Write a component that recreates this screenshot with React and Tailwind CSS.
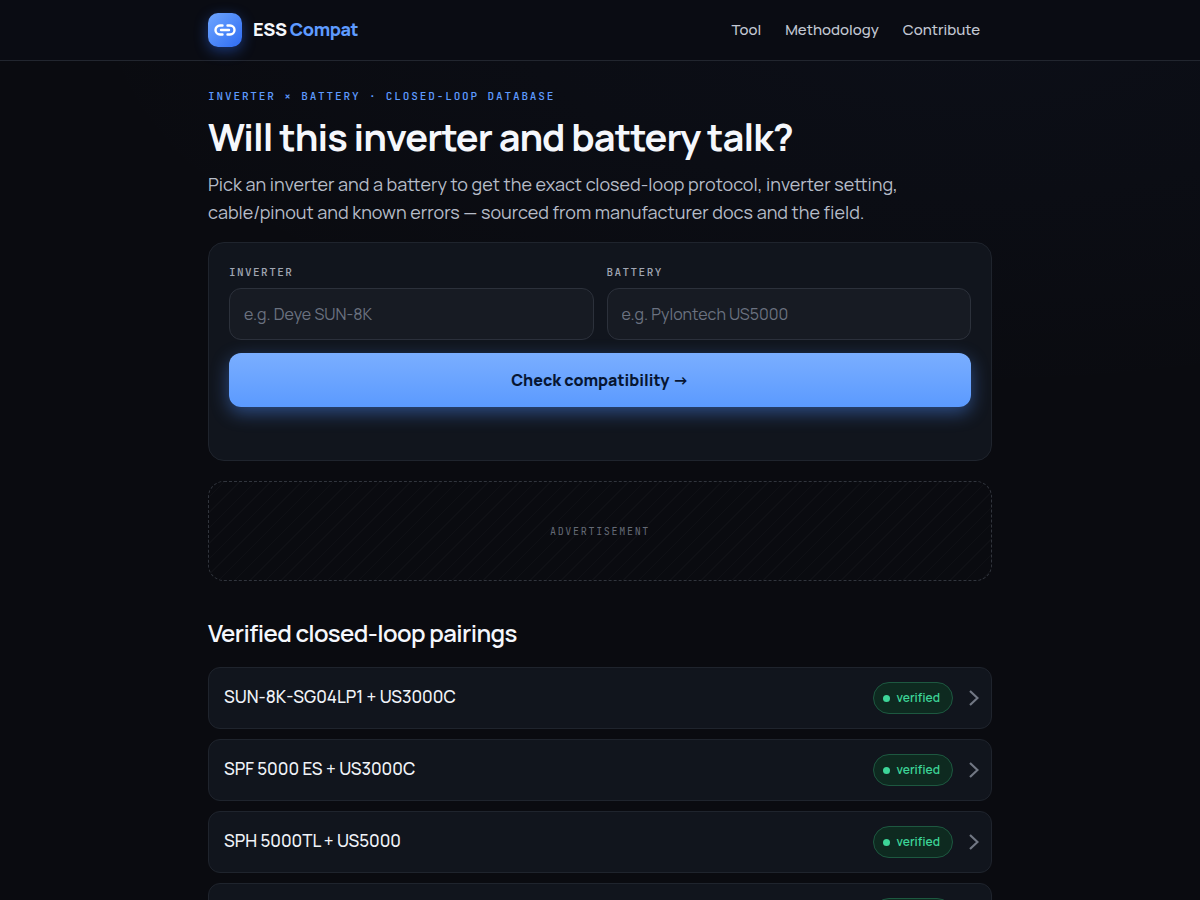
import { useState } from "react";

const navLinks = [
  { label: "Tool", href: "#tool" },
  { label: "Methodology", href: "#methodology" },
  { label: "Contribute", href: "#contribute" },
];

const pairings = [
  { id: 1, inverter: "SUN-8K-SG04LP1", battery: "US3000C" },
  { id: 2, inverter: "SPF 5000 ES", battery: "US3000C" },
  { id: 3, inverter: "SPH 5000TL", battery: "US5000" },
  { id: 4, inverter: "SPH 5000TL", battery: "US3000C" },
];

function Logo() {
  return (
    <a href="#top" className="flex items-center gap-[11px]">
      <span className="flex size-[34px] items-center justify-center rounded-[10px] bg-linear-to-br from-[#6ea5ff] to-[#2f6bf2] shadow-[0_4px_14px_rgba(47,107,242,0.45)]">
        <svg viewBox="0 0 24 24" className="size-6" fill="none" stroke="#fff" strokeWidth="2.4" strokeLinecap="round">
          <path d="M9.500 7.500H7a4.500 4.500 0 0 0 0 9h2.500" />
          <path d="M14.500 7.500H17a4.500 4.500 0 0 1 0 9h-2.500" />
          <path d="M8 12h8" />
        </svg>
      </span>
      <span className="pb-0.5 text-lg leading-6 font-extrabold tracking-tight text-[#f5f7fc]">
        ESS <span className="text-[#5e9bff]">Compat</span>
      </span>
    </a>
  );
}

function Header() {
  return (
    <header className="border-b border-[#22262f] bg-[#0a0c13]">
      <div className="mx-auto flex h-[60px] max-w-[820px] items-center justify-between px-[18px]">
        <Logo />
        <nav className="flex">
          {navLinks.map((link) => (
            <a key={link.label} href={link.href} className="px-3 py-2 text-[15px] leading-5 font-medium text-[#c3c8d3]">
              {link.label}
            </a>
          ))}
        </nav>
      </div>
    </header>
  );
}

function Field({ id, label, placeholder, value, onChange }) {
  return (
    <div>
      <label
        htmlFor={id}
        className="block font-['JetBrains_Mono','Roboto_Mono','Liberation_Mono',monospace] text-[11px] leading-4 font-medium tracking-[0.13em] text-[#a0a6b3] uppercase"
      >
        {label}
      </label>
      <input
        id={id}
        type="text"
        value={value}
        onChange={(e) => onChange(e.target.value)}
        placeholder={placeholder}
        className="mt-2 h-[52px] w-full rounded-xl border border-[#2c313b] bg-[#171b23] px-[14px] text-base text-[#f5f7fc] placeholder:text-[#6b7280] focus:border-[#5e9bff] focus:outline-none"
      />
    </div>
  );
}

function PairingRow({ pairing }) {
  return (
    <a
      href={`#pairing-${pairing.id}`}
      className="flex h-[62px] items-center rounded-xl border border-[#1f242d] bg-[#11151d] pr-3 pl-[15px]"
    >
      <span className="pb-0.5 text-[17px] leading-6 font-medium text-[#f0f3f8]">
        {pairing.inverter} + {pairing.battery}
      </span>
      <span className="ml-auto flex h-8 items-center gap-[7px] rounded-full border border-[#1d5840] bg-[#0e2a20] pr-3 pl-[9px] text-xs font-semibold text-[#3dd598]">
        <span className="size-[7px] rounded-full bg-[#3dd598]" />
        verified
      </span>
      <svg viewBox="0 0 10 16" className="ml-4 h-4 w-[10px]" fill="none" stroke="#717783" strokeWidth="2.2">
        <path d="M1 1 8.500 8 1 15" />
      </svg>
    </a>
  );
}

export default function App() {
  const [inverter, setInverter] = useState("");
  const [battery, setBattery] = useState("");

  return (
    <div className="min-h-screen bg-[#0a0b10] bg-[radial-gradient(900px_400px_at_80%_0,rgba(60,110,220,0.04),transparent)] font-['Manrope','Inter',sans-serif] text-[#f5f7fc]">
      <Header />
      <main className="mx-auto max-w-[820px] px-[18px] pt-[26px] pb-10">
        <p className="font-['JetBrains_Mono','Roboto_Mono','Liberation_Mono',monospace] text-[11px] leading-[18px] font-medium tracking-[0.17em] text-[#5e9bff] uppercase">
          Inverter × Battery · Closed-loop database
        </p>
        <h1 className="mt-[7px] text-[38px] leading-[48px] font-bold tracking-tight">
          Will this inverter and battery talk?
        </h1>
        <p className="mt-[10px] max-w-[720px] text-lg leading-7 text-[#b6bcc8]">
          Pick an inverter and a battery to get the exact closed-loop protocol, inverter setting,
          cable/pinout and known errors — sourced from manufacturer docs and the field.
        </p>

        <form
          onSubmit={(e) => e.preventDefault()}
          className="mt-4 rounded-2xl border border-[#1f242d] bg-[#11151d] px-5 pt-[21px] pb-[53px]"
        >
          <div className="grid gap-[13px] sm:grid-cols-2">
            <Field id="inverter" label="Inverter" placeholder="e.g. Deye SUN-8K" value={inverter} onChange={setInverter} />
            <Field id="battery" label="Battery" placeholder="e.g. Pylontech US5000" value={battery} onChange={setBattery} />
          </div>
          <button
            type="submit"
            className="mt-[13px] h-[54px] w-full rounded-xl bg-linear-to-b from-[#7aaeff] to-[#5b9aff] text-base font-extrabold text-[#071633] shadow-[0_6px_18px_rgba(78,143,255,0.45)]"
          >
            Check compatibility →
          </button>
        </form>

        <aside className="mt-5 flex h-[100px] items-center justify-center rounded-2xl border border-dashed border-[#31353d] bg-[repeating-linear-gradient(135deg,transparent_0_10px,rgba(255,255,255,0.022)_10px_11px)]">
          <span className="font-['JetBrains_Mono','Roboto_Mono','Liberation_Mono',monospace] text-[10px] tracking-[0.17em] text-[#646a76] uppercase">
            Advertisement
          </span>
        </aside>

        <h2 className="mt-9 text-2xl leading-8 font-semibold tracking-tight">Verified closed-loop pairings</h2>
        <div className="mt-[18px] flex flex-col gap-[10px]">
          {pairings.map((pairing) => (
            <PairingRow key={pairing.id} pairing={pairing} />
          ))}
        </div>
      </main>
    </div>
  );
}
